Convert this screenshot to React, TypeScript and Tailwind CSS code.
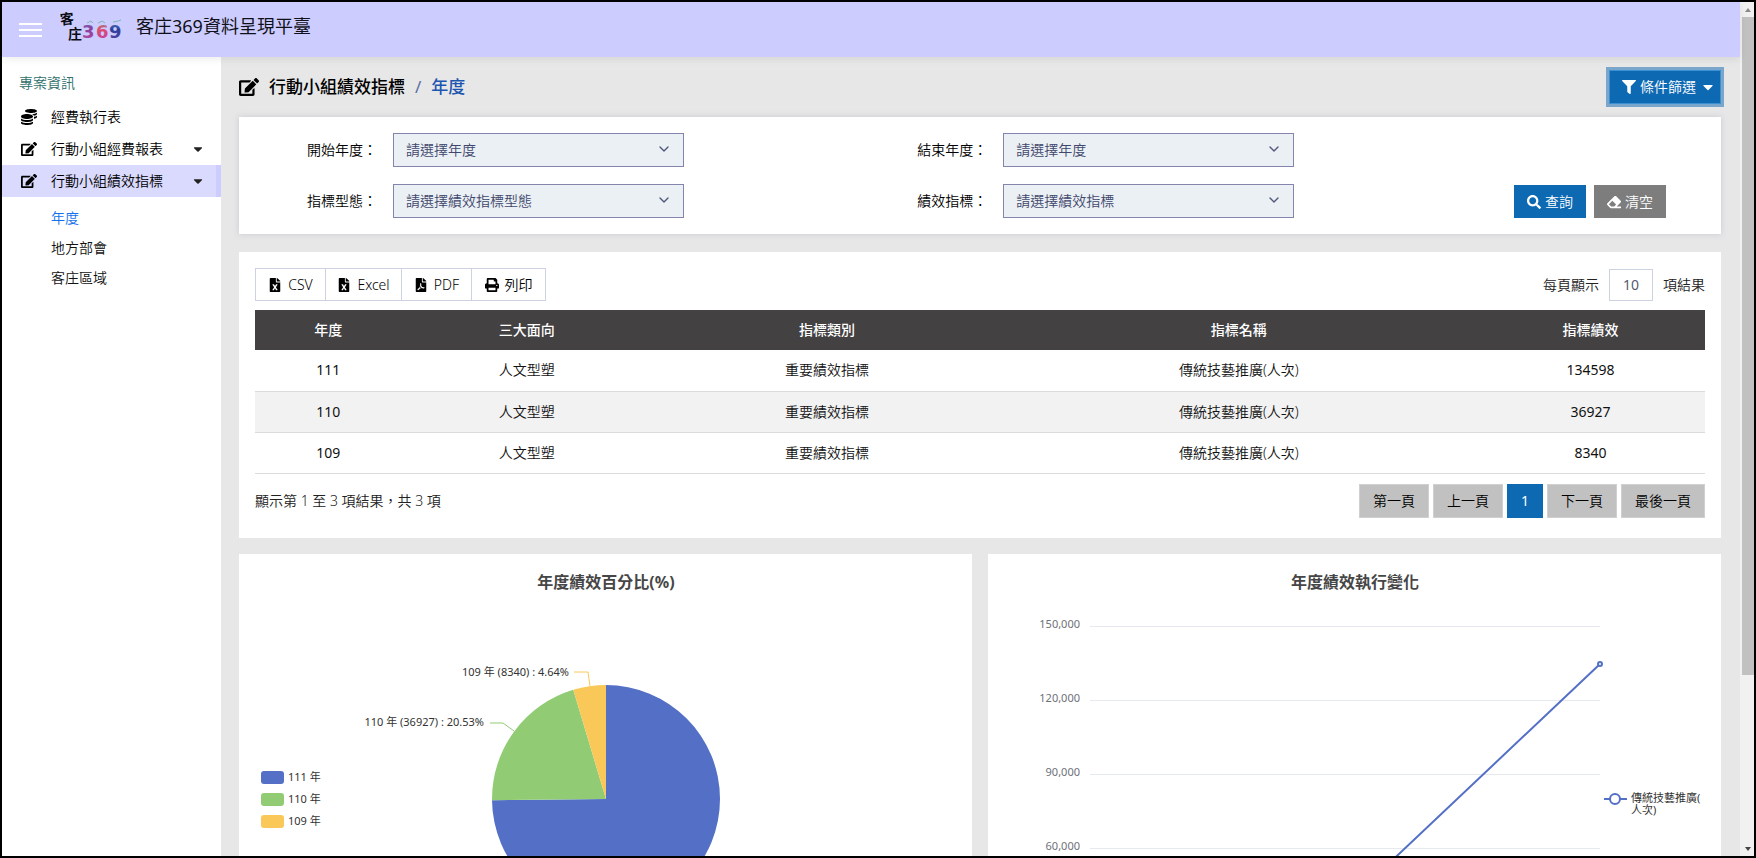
import { useState } from 'react';
import type { ReactNode } from 'react';
import {
    FaCaretDown,
    FaCoins,
    FaEdit,
    FaEraser,
    FaFileExcel,
    FaFilePdf,
    FaFilter,
    FaPrint,
    FaSearch,
} from 'react-icons/fa';
import { ChevronDown } from 'lucide-react';

const rows = [
    { year: '111', aspect: '人文型塑', category: '重要績效指標', name: '傳統技藝推廣(人次)', value: 134598 },
    { year: '110', aspect: '人文型塑', category: '重要績效指標', name: '傳統技藝推廣(人次)', value: 36927 },
    { year: '109', aspect: '人文型塑', category: '重要績效指標', name: '傳統技藝推廣(人次)', value: 8340 },
];

const columns = [
    { label: '年度', width: 'w-[10.1%]' },
    { label: '三大面向', width: 'w-[17.3%]' },
    { label: '指標類別', width: 'w-[24.1%]' },
    { label: '指標名稱', width: 'w-[32.7%]' },
    { label: '指標績效', width: 'w-[15.8%]' },
];

const subLinks = ['年度', '地方部會', '客庄區域'];

const exportButtons = [
    { label: 'CSV', icon: <FaFileExcel />, width: 'w-[71px]' },
    { label: 'Excel', icon: <FaFileExcel />, width: 'w-[77px]' },
    { label: 'PDF', icon: <FaFilePdf />, width: 'w-[71px]' },
    { label: '列印', icon: <FaPrint />, width: 'w-[75px]' },
];

const pages = ['第一頁', '上一頁', '1', '下一頁', '最後一頁'];

const pieColors = ['#5470c6', '#91cc75', '#fac858'];

function Logo() {
    return (
        <svg width="64" height="38" viewBox="0 0 64 38" role="img" aria-label="客庄369">
            <defs>
                <linearGradient id="d3" x1="0" y1="0" x2="0" y2="1">
                    <stop offset="0" stopColor="#6a6fb0" />
                    <stop offset="0.4" stopColor="#8b3f9e" />
                    <stop offset="1" stopColor="#b8489f" />
                </linearGradient>
                <linearGradient id="d6" x1="0" y1="0" x2="0" y2="1">
                    <stop offset="0" stopColor="#5aa0b8" />
                    <stop offset="0.35" stopColor="#e0506a" />
                    <stop offset="1" stopColor="#c23aa8" />
                </linearGradient>
                <linearGradient id="d9" x1="0" y1="0" x2="0" y2="1">
                    <stop offset="0" stopColor="#4f7fb8" />
                    <stop offset="0.4" stopColor="#2f3f9a" />
                    <stop offset="1" stopColor="#5a3fa0" />
                </linearGradient>
            </defs>
            <g className="font-['Noto_Sans_CJK_TC',sans-serif] font-bold" fill="#0c0c14">
                <text x="0" y="17" fontSize="14" transform="rotate(-6 8 12)">客</text>
                <text x="8" y="32" fontSize="14">庄</text>
            </g>
            <g className="font-['DejaVu_Sans',sans-serif] font-bold" fontSize="18">
                <text x="22" y="31" fill="url(#d3)">3</text>
                <text x="36" y="31" fill="url(#d6)">6</text>
                <text x="49" y="31" fill="url(#d9)">9</text>
            </g>
            <path d="M27 16l4-2 2 2M38 16l4-2 3 2M53 15l5-1 3-1" fill="none" stroke="#7fb6b0" strokeWidth="1" />
        </svg>
    );
}

function SelectField({ id, label, placeholder }: { id: string; label: string; placeholder: string }) {
    return (
        <div className="flex items-center">
            <label htmlFor={id} className="w-[86px] shrink-0 text-black">{label}：</label>
            <div className="relative w-[291px]">
                <select
                    id={id}
                    className="block w-full h-[34px] appearance-none border border-[#8484ac] bg-[#ebf0f4] pl-3 pr-8 text-sm text-[#41476c] outline-none"
                >
                    <option>{placeholder}</option>
                </select>
                <ChevronDown className="pointer-events-none absolute right-3 top-2 h-4 w-4 text-[#50567a]" />
            </div>
        </div>
    );
}

function NavItem({ icon, label, active, caret }: { icon: ReactNode; label: string; active?: boolean; caret?: boolean }) {
    return (
        <a
            href="#"
            className={`flex h-8 items-center border-r-[5px] pl-[19px] pr-[11px] text-black ${active
                ? 'border-[#ccccff] bg-[#dadaff]'
                : 'border-transparent'
            }`}
        >
            <span className="w-[30px] text-base">{icon}</span>
            <span className="flex-1">{label}</span>
            {caret && <FaCaretDown className="text-sm text-[#222]" />}
        </a>
    );
}

function PieChart() {
    const cx = 367, cy = 245, r = 114;
    const total = rows.reduce((sum, row) => sum + row.value, 0);
    let start = 0;
    const slices = rows.map((row, i) => {
        const end = start + (row.value / total) * Math.PI * 2;
        const large = end - start > Math.PI ? 1 : 0;
        const d = `M${cx} ${cy}L${cx + r * Math.sin(start)} ${cy - r * Math.cos(start)}`
            + `A${r} ${r} 0 ${large} 1 ${cx + r * Math.sin(end)} ${cy - r * Math.cos(end)}Z`;
        start = end;
        return <path key={row.year} d={d} fill={pieColors[i]} />;
    });

    return (
        <svg viewBox="0 0 733 400" className="block w-full" role="img" aria-label="年度績效百分比">
            <text x="367" y="34" textAnchor="middle" fontSize="16" className="font-bold" fill="#464646">年度績效百分比(%)</text>
            {slices}
            <g fill="none">
                <path d="M335 118H349L351 132" stroke="#fac858" />
                <path d="M251 169H264L275 177" stroke="#91cc75" />
                <path d="M448 325L458 336H472" stroke="#5470c6" />
            </g>
            <g fontSize="11" fill="#333">
                <text x="330" y="122" textAnchor="end">109 年 (8340) : 4.64%</text>
                <text x="245" y="172" textAnchor="end">110 年 (36927) : 20.53%</text>
                <text x="477" y="340">111 年 (134598) : 74.83%</text>
            </g>
            {rows.map((row, i) => (
                <g key={row.year}>
                    <rect x="22" y={217 + i * 22} width="23" height="13" rx="3" fill={pieColors[i]} />
                    <text x="49" y={227 + i * 22} fontSize="11" fill="#333">{row.year} 年</text>
                </g>
            ))}
        </svg>
    );
}

function LineChart() {
    const ticks = ['150,000', '120,000', '90,000', '60,000', '30,000', '0'];
    return (
        <svg viewBox="0 0 733 480" className="block w-full" role="img" aria-label="年度績效執行變化">
            <text x="367" y="34" textAnchor="middle" fontSize="16" className="font-bold" fill="#464646">年度績效執行變化</text>
            {ticks.map((tick, i) => (
                <g key={tick}>
                    <path d={`M102 ${72 + i * 74}H612`} stroke="#e6e9f0" shapeRendering="crispEdges" />
                    <text x="92" y={74 + i * 74} textAnchor="end" fontSize="11" fill="#6e7079">{tick}</text>
                </g>
            ))}
            <path d="M102 421L357 351L612 110" fill="none" stroke="#5470c6" strokeWidth="2" />
            <g fill="#fff" stroke="#5470c6" strokeWidth="2">
                <circle cx="102" cy="421" r="2" />
                <circle cx="357" cy="351" r="2" />
                <circle cx="612" cy="110" r="2" />
                <path d="M616 245H639" />
                <circle cx="627" cy="245" r="5" />
            </g>
            <g fontSize="11" fill="#333">
                <text x="643" y="248">傳統技藝推廣(</text>
                <text x="643" y="260">人次)</text>
            </g>
        </svg>
    );
}

export default function App() {
    const [page, setPage] = useState('1');
    const [pageSize, setPageSize] = useState('10');

    return (
        <div className="flex h-screen overflow-hidden border-2 border-black bg-[#e7e7e7] font-['Noto_Sans','Noto_Sans_CJK_TC',sans-serif] text-sm font-[350] text-[#222]">
            <div className="flex min-w-0 flex-1 flex-col">
                {/* Header */}
                <header className="z-10 flex h-[55px] shrink-0 items-center bg-[#ccccff] pl-[17px] shadow-[0_2px_8px_rgba(0,0,0,0.08)]">
                    <button type="button" aria-label="選單" className="flex w-[23px] flex-col gap-1">
                        <span className="h-0.5 w-full bg-white" />
                        <span className="h-0.5 w-full bg-white" />
                        <span className="h-0.5 w-full bg-white" />
                    </button>
                    <a href="#" className="ml-[18px] flex items-center gap-3 pb-2 text-lg font-normal text-[#101018]">
                        <Logo />
                        客庄369資料呈現平臺
                    </a>
                </header>

                <div className="flex min-h-0 flex-1">
                    {/* Sidebar */}
                    <nav className="w-[219px] shrink-0 bg-white pt-4">
                        <h2 className="mb-2 pl-[17px] text-sm text-[#2f6f6c]">專案資訊</h2>
                        <NavItem icon={<FaCoins />} label="經費執行表" />
                        <NavItem icon={<FaEdit />} label="行動小組經費報表" caret />
                        <NavItem icon={<FaEdit />} label="行動小組績效指標" caret active />
                        <div className="pt-1.5">
                            {subLinks.map((link, i) => (
                                <a
                                    key={link}
                                    href="#"
                                    className={`flex h-[30px] items-center pl-[49px] ${i === 0 ? 'text-[#1273eb]' : 'text-[#111]'}`}
                                >
                                    {link}
                                </a>
                            ))}
                        </div>
                    </nav>

                    <main className="min-w-0 flex-1 overflow-hidden pl-[18px] pr-[19px]">
                        <div className="flex h-[60px] items-center justify-between">
                            <h1 className="flex items-center text-[17px] font-medium text-black">
                                <FaEdit className="mr-2.5 text-xl" />
                                行動小組績效指標
                                <span className="mx-2.5 font-normal text-[#5a6fa5]">/</span>
                                <a href="#" className="text-[#1d56b0]">年度</a>
                            </h1>
                            <button
                                type="button"
                                className="flex h-[34px] items-center gap-1 border border-[#3c8fd0] bg-[#0e69b3] pl-3 pr-1 text-sm text-white ring-3 ring-[#7ba6cb]"
                            >
                                <FaFilter />
                                條件篩選
                                <FaCaretDown className="text-base" />
                            </button>
                        </div>

                        {/* Filters */}
                        <section className="flex items-end bg-white py-4 pl-[68px] pr-[55px] shadow-[0_0_6px_rgba(120,120,160,0.25)]">
                            <div className="flex w-[44.9%] flex-col gap-[17px]">
                                <SelectField id="start-year" label="開始年度" placeholder="請選擇年度" />
                                <SelectField id="kind" label="指標型態" placeholder="請選擇績效指標型態" />
                            </div>
                            <div className="flex flex-col gap-[17px]">
                                <SelectField id="end-year" label="結束年度" placeholder="請選擇年度" />
                                <SelectField id="indicator" label="績效指標" placeholder="請選擇績效指標" />
                            </div>
                            <div className="ml-auto flex gap-2">
                                <button type="button" className="flex h-[33px] w-[72px] items-center justify-center gap-1 bg-[#0e69b3] text-white">
                                    <FaSearch />
                                    查詢
                                </button>
                                <button type="button" className="flex h-[33px] w-[72px] items-center justify-center gap-1 bg-[#7d7d7d] text-white">
                                    <FaEraser />
                                    清空
                                </button>
                            </div>
                        </section>

                        {/* Results */}
                        <section className="mt-[18px] bg-white px-4 pb-5 pt-4">
                            <div className="flex h-[33px] items-center justify-between">
                                <div className="flex pl-px">
                                    {exportButtons.map(btn => (
                                        <button
                                            key={btn.label}
                                            type="button"
                                            className={`-ml-px flex h-[33px] items-center justify-center gap-1.5 border border-[#ccd2e2] text-black ${btn.width}`}
                                        >
                                            {btn.icon}
                                            {btn.label}
                                        </button>
                                    ))}
                                </div>
                                <label className="flex items-center gap-2.5">
                                    每頁顯示
                                    <input
                                        value={pageSize}
                                        onChange={e => setPageSize(e.target.value)}
                                        className="h-8 w-11 border border-[#ccd2e2] text-center font-normal text-[#555a70] outline-none"
                                    />
                                    項結果
                                </label>
                            </div>

                            <table className="mt-[9px] w-full table-fixed border-collapse text-center">
                                <thead>
                                    <tr className="h-10 bg-[#434142] text-white">
                                        {columns.map(col => (
                                            <th key={col.label} scope="col" className={`${col.width} font-medium`}>{col.label}</th>
                                        ))}
                                    </tr>
                                </thead>
                                <tbody>
                                    {rows.map(row => (
                                        <tr key={row.year} className="h-[41px] border-b border-[#dcdcdc] text-[#111] even:bg-[#f2f2f2]">
                                            <td className="font-normal">{row.year}</td>
                                            <td>{row.aspect}</td>
                                            <td>{row.category}</td>
                                            <td>{row.name}</td>
                                            <td className="font-normal">{row.value}</td>
                                        </tr>
                                    ))}
                                </tbody>
                            </table>

                            <div className="mt-2.5 flex items-center justify-between">
                                <p>顯示第 1 至 3 項結果，共 3 項</p>
                                <div className="flex gap-1">
                                    {pages.map(p => (
                                        <button
                                            key={p}
                                            type="button"
                                            onClick={() => setPage(p)}
                                            className={`h-[34px] border px-[13px] ${page === p
                                                ? 'border-[#0e69b3] bg-[#0e69b3] font-normal text-white'
                                                : 'border-[#d0d0d0] bg-[#c1c1c1] text-black'
                                            }`}
                                        >
                                            {p}
                                        </button>
                                    ))}
                                </div>
                            </div>
                        </section>

                        {/* Charts */}
                        <div className="mt-4 grid grid-cols-2 gap-4 font-normal">
                            <section className="bg-white">
                                <PieChart />
                            </section>
                            <section className="bg-white">
                                <LineChart />
                            </section>
                        </div>
                    </main>
                </div>
            </div>

            {/* Scrollbar */}
            <div className="flex w-3.5 shrink-0 flex-col bg-[#f1f1f1] pl-0.5">
                <span className="flex h-[15px] items-center justify-center">
                    <svg width="6" height="4" viewBox="0 0 6 4"><path d="M0 4L3 0L6 4Z" fill="#8a8a8a" /></svg>
                </span>
                <span className="h-[77%] bg-[#c1c1c1]" />
                <span className="mt-auto flex h-[15px] items-center justify-center">
                    <svg width="6" height="4" viewBox="0 0 6 4"><path d="M0 0L3 4L6 0Z" fill="#444" /></svg>
                </span>
            </div>
        </div>
    );
}
